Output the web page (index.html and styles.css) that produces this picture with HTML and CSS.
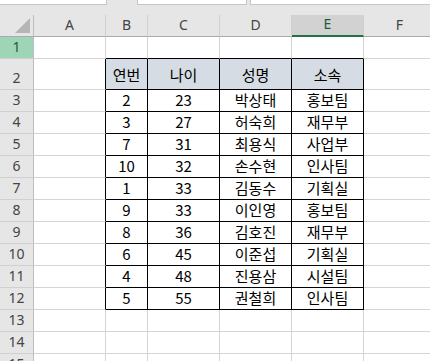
FILE: index.html
```html
<!DOCTYPE html>
<html lang="ko">
<head>
    <meta charset="UTF-8">
    <meta name="viewport" content="width=device-width, initial-scale=1.0">
    <title>부서별 명단</title>
    <link rel="stylesheet" href="styles.css">
</head>
<body>
    <div class="toolbar">
        <div class="box name-box"></div>
        <div class="box fx-box"></div>
        <div class="box formula-box"></div>
    </div>
    <div id="sheet" class="sheet"></div>

    <script>
        const columns = ['A', 'B', 'C', 'D', 'E', 'F'];
        const selectedCol = 'E';
        const selectedRow = 1;
        const totalRows = 15;

        // table starts at B2
        const header = ['연번', '나이', '성명', '소속'];
        const people = [
            [2, 23, '박상태', '홍보팀'],
            [3, 27, '허숙희', '재무부'],
            [7, 31, '최용식', '사업부'],
            [10, 32, '손수현', '인사팀'],
            [1, 33, '김동수', '기획실'],
            [9, 33, '이인영', '홍보팀'],
            [8, 36, '김호진', '재무부'],
            [6, 45, '이준섭', '기획실'],
            [4, 48, '진용삼', '시설팀'],
            [5, 55, '권철희', '인사팀']
        ];
        const firstRow = 2;
        const lastRow = firstRow + people.length;

        const sheet = document.getElementById('sheet');

        function addCell(cls, text) {
            const cell = document.createElement('div');
            cell.className = cls;
            if (text !== undefined) cell.textContent = text;
            sheet.appendChild(cell);
            return cell;
        }

        // corner + column letters
        const corner = addCell('corner');
        corner.innerHTML = '<svg width="15" height="15" viewBox="0 0 15 15"><polygon points="0,15 15,0 15,15" fill="#b5b5b5"/></svg>';
        columns.forEach(c => {
            addCell('col-head' + (c === selectedCol ? ' selected' : ''), c);
        });

        for (let r = 1; r <= totalRows; r++) {
            addCell('row-head' + (r === selectedRow ? ' selected' : '') + (r === 2 ? ' tall' : ''), r);
            columns.forEach((c, i) => {
                let cls = 'cell';
                let text;
                const inTable = r >= firstRow && r <= lastRow && i >= 1 && i <= 4;
                if (inTable) {
                    cls += ' boxed';
                    if (r === firstRow) {
                        cls += ' th';
                        text = header[i - 1];
                    } else {
                        text = people[r - firstRow - 1][i - 1];
                    }
                }
                // lines that sit on the table edge
                if (r === firstRow - 1 && i >= 1 && i <= 4) cls += ' edge-bottom';
                if (i === 0 && r >= firstRow && r <= lastRow) cls += ' edge-right';
                addCell(cls, text);
            });
        }
    </script>
</body>
</html>
```

FILE: styles.css
```css
body {
    margin: 0;
    background-color: #ffffff;
    font-family: "Noto Sans CJK KR", "Noto Sans", sans-serif;
    overflow: hidden;
}
.toolbar {
    display: flex;
    height: 15px;
    background-color: #e6e6e6;
}
.box {
    height: 4px;
    background-color: #ffffff;
    border: 1px solid #c6c6c6;
    border-top: none;
}
.name-box {
    width: 106px;
    border-left: none;
}
.fx-box {
    width: 108px;
    margin-left: 30px;
}
.formula-box {
    flex: 1;
    margin-left: 3px;
    border-right: none;
}
.sheet {
    display: grid;
    grid-template-columns: 34px 72px 42px 72px 72px 72px 72px;
    grid-template-rows: 22px 22px 31px repeat(13, 22px);
}
.sheet > div {
    box-sizing: border-box;
}
.corner {
    background-color: #e6e6e6;
    border-right: 1px solid #bdbdbd;
    border-bottom: 1px solid #ababab;
    display: flex;
    justify-content: flex-end;
    align-items: flex-end;
    padding: 0 3px 3px 0;
}
.corner svg {
    display: block;
}
.col-head {
    background-color: #e6e6e6;
    border-right: 1px solid #d0d0d0;
    border-bottom: 1px solid #ababab;
    color: #444444;
    font-family: "Noto Sans", sans-serif;
    font-size: 14px;
    display: flex;
    justify-content: center;
    align-items: center;
    padding-bottom: 3px;
}
.col-head.selected {
    background-color: #d2d2d2;
    border-bottom: 2px solid #217346;
    color: #1e5a35;
}
.row-head {
    background-color: #e6e6e6;
    border-right: 1px solid #bdbdbd;
    border-bottom: 1px solid #d0d0d0;
    color: #444444;
    font-family: "Noto Sans", sans-serif;
    font-size: 14px;
    line-height: 16px;
    display: flex;
    justify-content: center;
    align-items: flex-end;
    padding-bottom: 3px;
}
.row-head.selected {
    background-color: #9fd5b7;
    color: #1e5a35;
}
.cell {
    border-right: 1px solid #d4d4d4;
    border-bottom: 1px solid #d4d4d4;
    color: #000000;
    font-size: 15px;
    line-height: 18px;
    display: flex;
    justify-content: center;
    align-items: flex-end;
    padding-bottom: 2px;
}
.cell.boxed {
    border-right-color: #000000;
    border-bottom-color: #000000;
}
.cell.th {
    background-color: #d6dce4;
    padding-bottom: 5px;
}
.cell.edge-bottom {
    border-bottom-color: #000000;
}
.cell.edge-right {
    border-right-color: #000000;
}
```
